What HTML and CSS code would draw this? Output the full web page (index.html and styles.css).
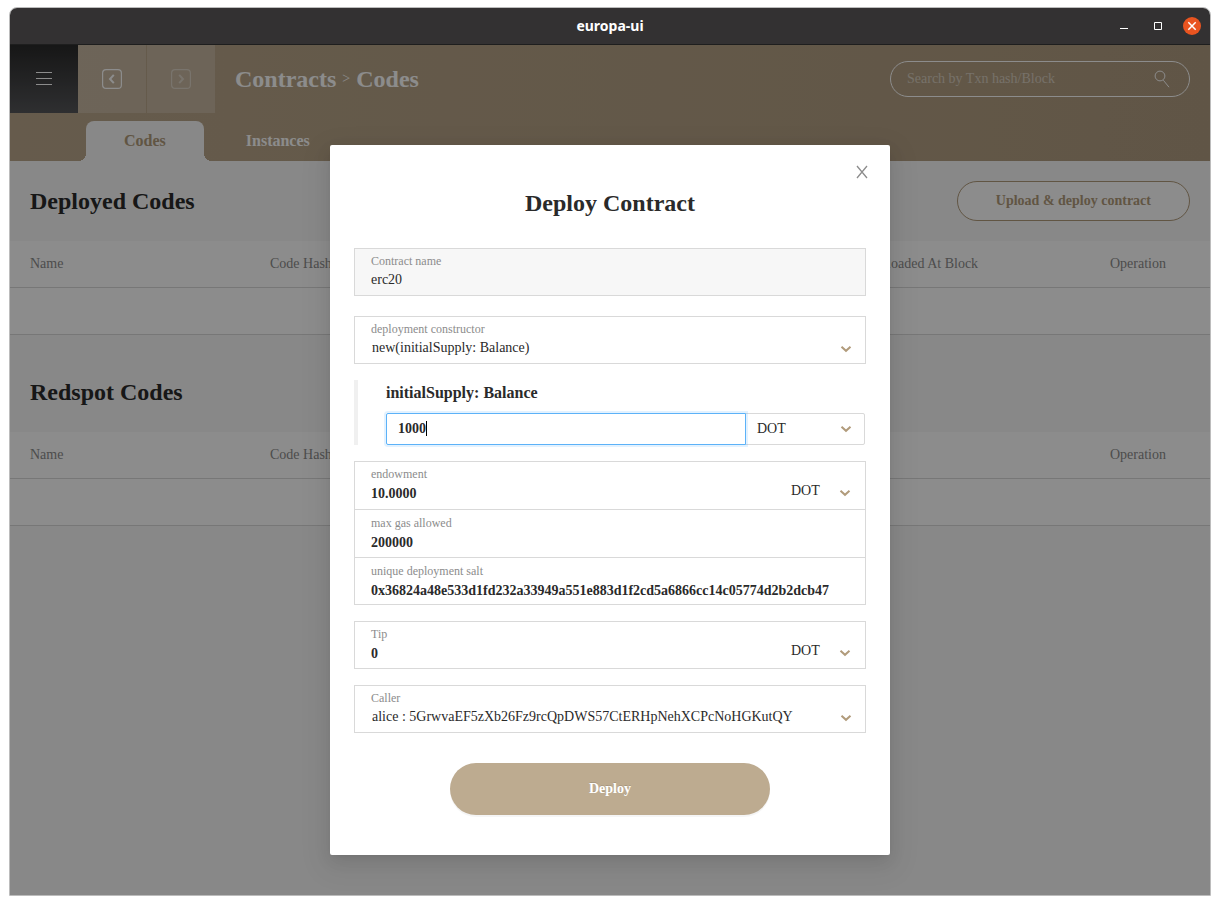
FILE: index.html
```html
<!DOCTYPE html>
<html lang="en">
<head>
<meta charset="utf-8">
<title>europa-ui</title>
<link rel="stylesheet" href="styles.css">
</head>
<body>
<div class="window">
  <header class="titlebar">
    <span class="titlebar-name">europa-ui</span>
    <div class="window-controls">
      <button class="window-button" aria-label="Minimize"><svg width="10" height="10" viewBox="0 0 10 10"><path d="M1 7.500h8" stroke="#fff" fill="none"/></svg></button>
      <button class="window-button" aria-label="Maximize"><svg width="10" height="10" viewBox="0 0 10 10"><path d="M1.500 1.500h7v7h-7z" stroke="#fff" fill="none"/></svg></button>
      <button class="window-button window-close" aria-label="Close window"><svg width="10" height="10" viewBox="0 0 10 10"><path d="M1.300 1.300l7.400 7.400M8.700 1.300l-7.400 7.400" stroke="#fff" stroke-width="1.500" fill="none"/></svg></button>
    </div>
  </header>

  <div class="app">
    <div class="banner">
      <div class="toolbar">
        <button class="menu-button" aria-label="Menu"><svg width="16" height="14" viewBox="0 0 16 14"><path d="M0 .5h16M0 6.500h16M0 12.500h16" stroke="#fff" fill="none"/></svg></button>
        <button class="nav-button" aria-label="Back"><svg width="20" height="20" viewBox="0 0 20 20" fill="none" stroke="#fff"><rect x=".6" y=".6" width="18.800" height="18.800" rx="3.500" stroke-width="1.200"/><path d="M11.800 5.800L8 10l3.800 4.200" stroke-width="2"/></svg></button>
        <button class="nav-button nav-forward" aria-label="Forward"><svg width="20" height="20" viewBox="0 0 20 20" fill="none" stroke="#fff" stroke-opacity=".4"><rect x=".6" y=".6" width="18.800" height="18.800" rx="3.500" stroke-width="1.200"/><path d="M8.200 5.800L12 10l-3.800 4.200" stroke-width="2"/></svg></button>
        <nav class="breadcrumb" aria-label="Breadcrumb">
          <span class="crumb">Contracts</span>
          <span class="crumb-separator">&gt;</span>
          <span class="crumb">Codes</span>
        </nav>
        <label class="search">
          <input class="search-input" type="text" placeholder="Search by Txn hash/Block" aria-label="Search">
          <svg width="16" height="18" viewBox="0 0 16 18" fill="none" stroke="#fff"><circle cx="6" cy="6" r="4.900"/><path d="M9.300 10.200L15 17.200"/></svg>
        </label>
      </div>
      <nav class="tabs">
        <a class="tab tab-active" href="#codes">Codes</a>
        <a class="tab" href="#instances">Instances</a>
      </nav>
    </div>

    <main>
      <section class="section">
        <div class="section-head">
          <h2 class="section-title">Deployed Codes</h2>
          <button class="upload-button">Upload &amp; deploy contract</button>
        </div>
        <table class="table">
          <thead><tr><th class="col-name">Name</th><th class="col-hash">Code Hash</th><th class="col-block">Uploaded At Block</th><th class="col-operation">Operation</th></tr></thead>
          <tbody><tr><td colspan="4"></td></tr></tbody>
        </table>
      </section>
      <section class="section">
        <div class="section-head">
          <h2 class="section-title">Redspot Codes</h2>
        </div>
        <table class="table">
          <thead><tr><th class="col-name">Name</th><th class="col-hash">Code Hash</th><th class="col-block"></th><th class="col-operation">Operation</th></tr></thead>
          <tbody><tr><td colspan="4"></td></tr></tbody>
        </table>
      </section>
    </main>

    <div class="mask">
      <form class="modal" role="dialog" aria-labelledby="modal-title">
        <button class="modal-close" type="button" aria-label="Close"><svg width="12" height="14" viewBox="0 0 12 14"><path d="M1 1l10 12M11 1L1 13" stroke="#8c8c8c" stroke-width="1.300" fill="none"/></svg></button>
        <h1 class="modal-title" id="modal-title">Deploy Contract</h1>

        <div class="box box-disabled box-name">
          <div class="field">
            <label class="label" for="name">Contract name</label>
            <input class="value value-plain" id="name" type="text" value="erc20" disabled>
          </div>
        </div>

        <div class="box">
          <div class="field">
            <label class="label" for="ctor">deployment constructor</label>
            <div class="select">
              <select class="value value-select" id="ctor"><option>new(initialSupply: Balance)</option></select>
              <svg class="chevron" width="12" height="8" viewBox="0 0 12 8"><path d="M1.500 1.800L6 5.800l4.500-4" stroke="#b19b7b" stroke-width="2" fill="none"/></svg>
            </div>
          </div>
        </div>

        <div class="param">
          <label class="param-name" for="supply">initialSupply: Balance</label>
          <div class="param-row">
            <div class="param-value">
              <input class="param-input" id="supply" type="text" value="1000">
              <span class="caret"></span>
            </div>
            <div class="select param-unit">
              <select class="unit-select" aria-label="Supply unit"><option>DOT</option></select>
              <svg class="chevron" width="12" height="8" viewBox="0 0 12 8"><path d="M1.500 1.800L6 5.800l4.500-4" stroke="#b19b7b" stroke-width="2" fill="none"/></svg>
            </div>
          </div>
        </div>

        <div class="box">
          <div class="field field-amount">
            <label class="label" for="endowment">endowment</label>
            <input class="value" id="endowment" type="text" value="10.0000">
            <div class="select unit">
              <select class="value value-plain" aria-label="Endowment unit"><option>DOT</option></select>
              <svg class="chevron" width="12" height="8" viewBox="0 0 12 8"><path d="M1.500 1.800L6 5.800l4.500-4" stroke="#b19b7b" stroke-width="2" fill="none"/></svg>
            </div>
          </div>
          <div class="field">
            <label class="label" for="gas">max gas allowed</label>
            <input class="value" id="gas" type="text" value="200000">
          </div>
          <div class="field">
            <label class="label" for="salt">unique deployment salt</label>
            <input class="value" id="salt" type="text" value="0x36824a48e533d1fd232a33949a551e883d1f2cd5a6866cc14c05774d2b2dcb47">
          </div>
        </div>

        <div class="box">
          <div class="field field-amount">
            <label class="label" for="tip">Tip</label>
            <input class="value" id="tip" type="text" value="0">
            <div class="select unit">
              <select class="value value-plain" aria-label="Tip unit"><option>DOT</option></select>
              <svg class="chevron" width="12" height="8" viewBox="0 0 12 8"><path d="M1.500 1.800L6 5.800l4.500-4" stroke="#b19b7b" stroke-width="2" fill="none"/></svg>
            </div>
          </div>
        </div>

        <div class="box">
          <div class="field">
            <label class="label" for="caller">Caller</label>
            <div class="select">
              <select class="value value-select" id="caller"><option>alice : 5GrwvaEF5zXb26Fz9rcQpDWS57CtERHpNehXCPcNoHGKutQY</option></select>
              <svg class="chevron" width="12" height="8" viewBox="0 0 12 8"><path d="M1.500 1.800L6 5.800l4.500-4" stroke="#b19b7b" stroke-width="2" fill="none"/></svg>
            </div>
          </div>
        </div>

        <button class="deploy-button" type="button">Deploy</button>
      </form>
    </div>
  </div>
</div>
</body>
</html>
```

FILE: styles.css
```css
* {
  box-sizing: border-box;
}

body {
  margin: 0;
  padding: 7px 9px 9px;
  min-height: 100vh;
  display: flex;
  background: #fff;
  color: #2a2a2a;
  font-family: "Liberation Serif", "Times New Roman", serif;
  font-size: 14px;
  line-height: 20px;
}

button,
input,
select {
  margin: 0;
  padding: 0;
  border: 0;
  background: none;
  color: inherit;
  font: inherit;
  outline: none;
  appearance: none;
}

svg {
  display: block;
}

.window {
  flex: 1;
  display: flex;
  flex-direction: column;
  border: 1px solid #bcbcbc;
  border-radius: 8px 8px 0 0;
  overflow: hidden;
}

.titlebar {
  display: grid;
  grid-template-columns: 1fr auto 1fr;
  align-items: center;
  height: 37px;
  border-bottom: 1px solid #1e1e1e;
  background: #333132;
  color: #fff;
}

.titlebar-name {
  grid-column: 2;
  font-family: "Noto Sans", sans-serif;
  font-size: 14px;
  font-weight: 700;
}

.window-controls {
  display: flex;
  justify-content: flex-end;
  gap: 16px;
  padding-right: 9px;
}

.window-button {
  display: grid;
  place-items: center;
  width: 18px;
  height: 18px;
}

.window-close {
  border-radius: 50%;
  background: #e95420;
}

.app {
  position: relative;
  flex: 1;
  background: #f7f7f7;
}

.banner {
  background: linear-gradient(90deg, #baa78b, #b09c80);
}

.toolbar {
  display: flex;
  align-items: center;
  height: 68px;
  padding-right: 20px;
}

.menu-button,
.nav-button {
  display: grid;
  place-items: center;
  width: 68px;
  height: 68px;
}

.menu-button {
  background: linear-gradient(#2a2a2a, #555659);
}

.nav-button {
  background: rgba(255, 255, 255, 0.2);
}

.nav-forward {
  margin-left: 1px;
}

.breadcrumb {
  flex: 1;
  display: flex;
  align-items: center;
  gap: 6px;
  padding-left: 20px;
  color: #fff;
}

.crumb {
  font-size: 24px;
  font-weight: 700;
  line-height: 28px;
}

.crumb-separator {
  font-size: 14px;
}

.search {
  display: flex;
  align-items: center;
  width: 300px;
  height: 36px;
  padding: 0 19px 0 16px;
  border: 1px solid #fff;
  border-radius: 18px;
}

.search-input {
  flex: 1;
  color: #fff;
}

.search-input::placeholder {
  color: rgba(255, 255, 255, 0.5);
}

.tabs {
  display: flex;
  gap: 4px;
  padding: 8px 76px 0;
}

.tab {
  position: relative;
  padding: 10px 38px;
  color: #fff;
  font-size: 16px;
  font-weight: 700;
  text-decoration: none;
}

.tab-active {
  border-radius: 8px 8px 0 0;
  background: #f7f7f7;
  color: #b19b7b;
}

.tab-active::before,
.tab-active::after {
  content: "";
  position: absolute;
  bottom: 0;
  width: 8px;
  height: 8px;
}

.tab-active::before {
  right: 100%;
  background: radial-gradient(circle at 0 0, transparent 8px, #f7f7f7 8px);
}

.tab-active::after {
  left: 100%;
  background: radial-gradient(circle at 100% 0, transparent 8px, #f7f7f7 8px);
}

.section + .section {
  margin-top: 17px;
}

.section-head {
  display: flex;
  align-items: center;
  justify-content: space-between;
  height: 80px;
  padding: 0 20px;
}

.section-title {
  margin: 0;
  font-size: 24px;
  line-height: 28px;
}

.upload-button {
  height: 40px;
  padding: 0 38px;
  border: 1px solid #b19b7b;
  border-radius: 20px;
  background: #fff;
  color: #b19b7b;
  font-weight: 700;
}

.table {
  width: 100%;
  table-layout: fixed;
  border-spacing: 0;
  background: #fff;
}

.table th,
.table td {
  height: 47px;
  padding: 0 20px;
  border-bottom: 1px solid #d9d9d9;
  color: #8c8c8c;
  font-weight: 400;
  text-align: left;
}

.col-name,
.col-block {
  width: 20%;
}

.col-hash {
  width: 50%;
}

.col-operation {
  width: 10%;
}

.mask {
  position: absolute;
  inset: 0;
  display: flex;
  align-items: flex-start;
  justify-content: center;
  padding-top: 100px;
  background: rgba(0, 0, 0, 0.45);
}

.modal {
  position: relative;
  display: flex;
  flex-direction: column;
  gap: 16px;
  width: 560px;
  padding: 44px 24px 40px;
  border-radius: 2px;
  background: #fff;
  box-shadow: 0 3px 6px -4px rgba(0, 0, 0, 0.12),
    0 6px 16px rgba(0, 0, 0, 0.08), 0 9px 28px 8px rgba(0, 0, 0, 0.05);
}

.modal-close {
  position: absolute;
  top: 20px;
  right: 22px;
}

.modal-title {
  margin: 0 0 15px;
  font-size: 24px;
  line-height: 28px;
  text-align: center;
}

.box {
  border: 1px solid #d9d9d9;
}

.box-disabled {
  background: #f7f7f7;
}

.box-name {
  margin-bottom: 4px;
}

.field {
  display: flex;
  flex-direction: column;
  padding: 4px 16px;
}

.field + .field {
  padding: 5px 16px 2px;
  border-top: 1px solid #d9d9d9;
}

.field + .field:last-child {
  padding-bottom: 1px;
}

.label {
  color: #8c8c8c;
  font-size: 12px;
  line-height: 16px;
}

.value {
  display: block;
  width: 100%;
  height: 24px;
  font-weight: 700;
}

.value-plain,
.value-select {
  height: 22px;
  font-weight: 400;
}

.value-select {
  padding-left: 1px;
}

.field-amount {
  display: grid;
  grid-template-columns: 1fr 58px;
  padding-bottom: 2px;
}

.field-amount:not(:last-child) {
  padding-bottom: 3px;
}

.unit {
  grid-column: 2;
  grid-row: 1 / 3;
  align-self: end;
  margin-bottom: 4px;
}

.select {
  position: relative;
}

.chevron {
  position: absolute;
  top: 8px;
  right: -3px;
  pointer-events: none;
}

.unit .chevron {
  top: 9px;
  right: -2px;
}

.param {
  padding: 3px 1px 0 28px;
  border-left: 4px solid #f0f0f0;
}

.param-name {
  display: block;
  margin-bottom: 10px;
  font-size: 16px;
  font-weight: 700;
}

.param-row {
  display: flex;
}

.param-value {
  position: relative;
  z-index: 1;
  flex: 3;
}

.param-input {
  display: block;
  width: 100%;
  height: 32px;
  padding: 0 11px;
  border: 1px solid #5cb2f8;
  border-radius: 2px 0 0 2px;
  box-shadow: 0 0 0 2px rgba(24, 144, 255, 0.12);
  font-weight: 700;
}

.caret {
  position: absolute;
  top: 8px;
  left: 40px;
  width: 1px;
  height: 15px;
  background: #000;
}

.param-unit {
  flex: 1;
  margin-left: -1px;
}

.unit-select {
  display: block;
  width: 100%;
  height: 32px;
  padding: 0 11px;
  border: 1px solid #d9d9d9;
  border-radius: 0 2px 2px 0;
}

.param-unit .chevron {
  top: 12px;
  right: 13px;
}

.deploy-button {
  align-self: center;
  width: 320px;
  height: 52px;
  margin-top: 14px;
  border-radius: 26px;
  background: #bdab90;
  box-shadow: 0 2px 0 rgba(0, 0, 0, 0.04);
  color: #fff;
  font-weight: 700;
  text-shadow: 0 -1px 0 rgba(0, 0, 0, 0.12);
}
```
